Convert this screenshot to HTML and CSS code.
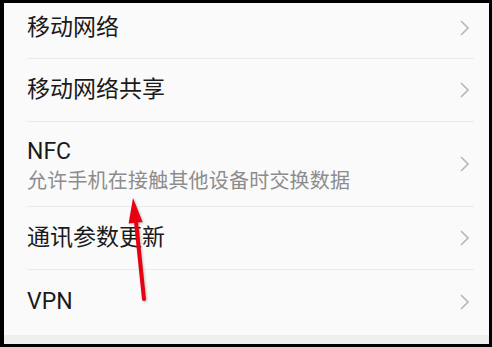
FILE: index.html
```html
<!DOCTYPE html>
<html lang="zh-CN">
<head>
<meta charset="utf-8">
<link rel="stylesheet" href="styles.css">
</head>
<body>
<div class="screen">
  <ul class="list">
    <li class="row row-first">
      <div class="label"><div class="title">移动网络</div></div>
      <svg class="chev" viewBox="0 0 9 16" width="9" height="16"><polyline points="1,1 8,8 1,15"/></svg>
    </li>
    <li class="row">
      <div class="label"><div class="title">移动网络共享</div></div>
      <svg class="chev" viewBox="0 0 9 16" width="9" height="16"><polyline points="1,1 8,8 1,15"/></svg>
    </li>
    <li class="row row-tall">
      <div class="label label-two">
        <div class="title">NFC</div>
        <div class="sub">允许手机在接触其他设备时交换数据</div>
      </div>
      <svg class="chev" viewBox="0 0 9 16" width="9" height="16"><polyline points="1,1 8,8 1,15"/></svg>
    </li>
    <li class="row">
      <div class="label"><div class="title">通讯参数更新</div></div>
      <svg class="chev" viewBox="0 0 9 16" width="9" height="16"><polyline points="1,1 8,8 1,15"/></svg>
    </li>
    <li class="row row-last">
      <div class="label"><div class="title">VPN</div></div>
      <svg class="chev" viewBox="0 0 9 16" width="9" height="16"><polyline points="1,1 8,8 1,15"/></svg>
    </li>
  </ul>
  <div class="band"></div>
</div>
<svg class="arrow" width="492" height="347" viewBox="0 0 492 347">
  <line x1="144" y1="299" x2="135.8" y2="220" stroke="#e60012" stroke-width="4" stroke-linecap="round"/>
  <polygon points="133,198 142.6,222 128.6,223.5" fill="#e60012"/>
</svg>
</body>
</html>
```

FILE: styles.css
```css
html, body {
  margin: 0;
  padding: 0;
  background: #000;
}
body {
  width: 492px;
  height: 347px;
  overflow: hidden;
  position: relative;
  font-family: "Roboto", "Noto Sans CJK SC", sans-serif;
}
.screen {
  margin: 3px 3px 0 4px;
  height: 341px;
  background: #fafafa;
  display: flex;
  flex-direction: column;
}
.list {
  list-style: none;
  margin: 0;
  padding: 0;
  flex: 1;
}
.row {
  display: flex;
  align-items: center;
  margin: 0 15px 0 23px;
  padding-right: 5px;
  height: 62px;
  border-bottom: 1px solid #ebebeb;
}
.row-first {
  height: 49px;
  padding-bottom: 6px;
}
.row-tall {
  height: 84px;
}
.row-last {
  height: 63px;
  border-bottom: none;
}
.label {
  flex: 1;
}
.label-two {
  padding-top: 4px;
}
.title {
  font-size: 23px;
  line-height: 28px;
  color: #1a1a1a;
}
.sub {
  font-size: 20px;
  line-height: 26px;
  letter-spacing: 0.2px;
  color: #8c8c8c;
  margin-top: 2px;
}
.chev {
  display: block;
}
.chev polyline {
  fill: none;
  stroke: #b8b8b8;
  stroke-width: 1.6;
}
.band {
  height: 9px;
  background: #efefef;
}
.arrow {
  position: absolute;
  left: 0;
  top: 0;
  filter: drop-shadow(1px 1px 1px rgba(0,0,0,0.25));
}
```
